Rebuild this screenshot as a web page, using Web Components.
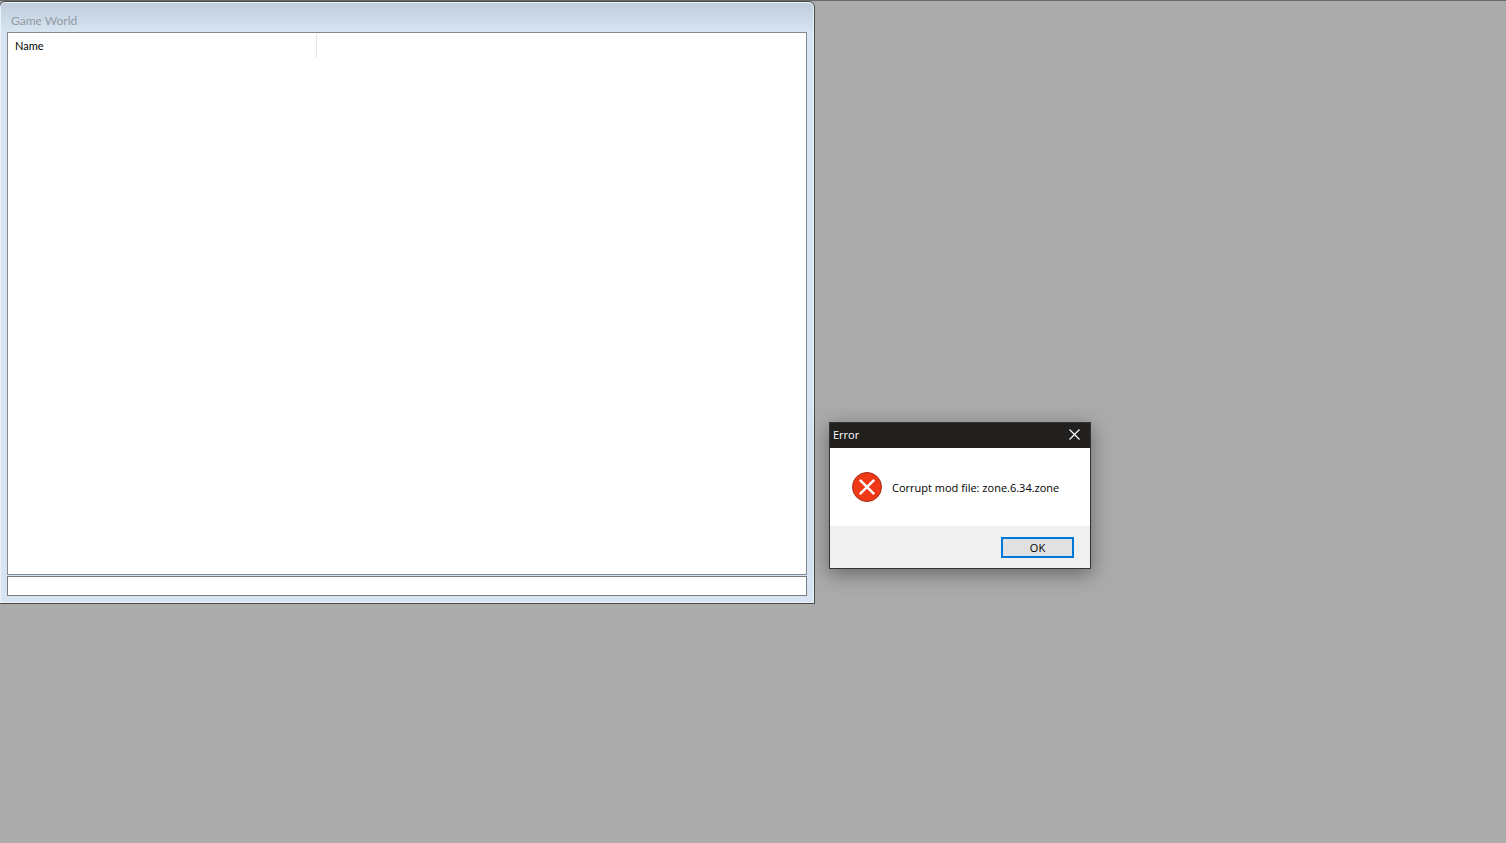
<!DOCTYPE html>
<html lang="en">
<head>
<meta charset="utf-8">
<title>Game World</title>
<style>
    html, body {
        height: 100%;
        margin: 0;
    }
    body {
        font: 11px/16px "Open Sans", "Noto Sans", sans-serif;
        color: #000;
        overflow: hidden;
    }
</style>
</head>
<body>

<mdi-desktop>
    <mdi-window caption="Game World" style="left: -1px; top: 1px; width: 816px; height: 603px">
        <column-list columns="Name"></column-list>
        <status-field label="Status"></status-field>
    </mdi-window>

    <message-box caption="Error" style="left: 829px; top: 422px; width: 262px">
        <error-icon slot="icon"></error-icon>
        Corrupt mod file: zone.6.34.zone
        <dialog-button slot="actions">OK</dialog-button>
    </message-box>
</mdi-desktop>

<script>
class MdiDesktop extends HTMLElement {
    constructor() {
        super();
        this.attachShadow({ mode: 'open' });
        this.shadowRoot.innerHTML = `
            <style>
                :host {
                    display: block;
                    position: relative;
                    box-sizing: border-box;
                    height: 100%;
                    overflow: hidden;
                    border-top: 1px solid #696969;
                    background: #ababab;
                }
                .surface {
                    position: absolute;
                    inset: -1px 0 0;
                }
            </style>
            <div class="surface"><slot></slot></div>
        `;
    }
}

class MdiWindow extends HTMLElement {
    constructor() {
        super();
        this.attachShadow({ mode: 'open' });
        this.shadowRoot.innerHTML = `
            <style>
                :host {
                    display: flex;
                    flex-direction: column;
                    position: absolute;
                    box-sizing: border-box;
                    padding: 0 6px 6px;
                    border: 1px solid #4b4b4b;
                    border-radius: 6px 6px 0 0;
                    background: linear-gradient(#bfcddb, #d7e4f2 30px);
                    box-shadow: inset 0 0 0 1px #edf2f9;
                }
                header {
                    display: flex;
                    align-items: center;
                    height: 30px;
                    padding: 8px 5px 0;
                    box-sizing: border-box;
                    color: #929aa3;
                    font-family: Lato, sans-serif;
                    font-size: 12px;
                }
                .client {
                    flex: 1;
                    display: flex;
                    flex-direction: column;
                    gap: 1px;
                    padding: 0 1px 1px;
                }
            </style>
            <header></header>
            <div class="client"><slot></slot></div>
        `;
    }

    connectedCallback() {
        this.shadowRoot.querySelector('header').textContent = this.getAttribute('caption') || '';
    }
}

class ColumnList extends HTMLElement {
    constructor() {
        super();
        this.attachShadow({ mode: 'open' });
        this.shadowRoot.innerHTML = `
            <style>
                :host {
                    display: block;
                    flex: 1;
                    border: 1px solid #828790;
                    background: #fff;
                }
                table {
                    border-spacing: 0;
                    padding-top: 1px;
                }
                th {
                    width: 301px;
                    height: 24px;
                    padding: 0 0 0 7px;
                    border-right: 1px solid #e5e5e5;
                    font-family: Lato, sans-serif;
                    font-weight: normal;
                    text-align: left;
                }
            </style>
            <table>
                <thead><tr></tr></thead>
                <tbody></tbody>
            </table>
        `;
    }

    connectedCallback() {
        const row = this.shadowRoot.querySelector('thead tr');
        const columns = (this.getAttribute('columns') || '').split(',');
        for (const name of columns) {
            const th = document.createElement('th');
            th.scope = 'col';
            th.textContent = name;
            row.appendChild(th);
        }
    }
}

class StatusField extends HTMLElement {
    constructor() {
        super();
        this.attachShadow({ mode: 'open' });
        this.shadowRoot.innerHTML = `
            <style>
                :host {
                    display: block;
                }
                input {
                    display: block;
                    box-sizing: border-box;
                    width: 100%;
                    height: 20px;
                    padding: 0 6px;
                    border: 1px solid #7a7a7a;
                    border-radius: 0;
                    background: #fff;
                    font: inherit;
                }
            </style>
            <input type="text" readonly>
        `;
    }

    connectedCallback() {
        this.shadowRoot.querySelector('input').setAttribute('aria-label', this.getAttribute('label') || '');
    }
}

class MessageBox extends HTMLElement {
    constructor() {
        super();
        this.attachShadow({ mode: 'open' });
        this.shadowRoot.innerHTML = `
            <style>
                :host {
                    display: block;
                    position: absolute;
                    box-sizing: border-box;
                    border: 1px solid #333;
                    background: #fff;
                    box-shadow: 0 5px 18px 1px rgba(0, 0, 0, .36);
                }
                header {
                    display: flex;
                    align-items: center;
                    justify-content: space-between;
                    box-sizing: border-box;
                    height: 25px;
                    padding: 0 10px 2px 3px;
                    background: #21201e;
                    color: #fff;
                }
                .close {
                    display: block;
                    padding: 0;
                    border: 0;
                    background: none;
                    color: inherit;
                }
                .close svg {
                    display: block;
                }
                .body {
                    display: flex;
                    align-items: center;
                    gap: 10px;
                    height: 78px;
                    padding: 0 22px;
                    white-space: nowrap;
                }
                .text {
                    padding-top: 2px;
                }
                footer {
                    display: flex;
                    justify-content: flex-end;
                    padding: 11px 16px 10px;
                    background: #f0f0f0;
                }
            </style>
            <header>
                <span class="caption"></span>
                <button class="close" type="button" aria-label="Close">
                    <svg width="11" height="11" viewBox="0 0 11 11">
                        <path d="M.5.5l10 10M10.5.5l-10 10" fill="none" stroke="currentColor" stroke-width="1.2"/>
                    </svg>
                </button>
            </header>
            <div class="body">
                <slot name="icon"></slot>
                <div class="text"><slot></slot></div>
            </div>
            <footer><slot name="actions"></slot></footer>
        `;
    }

    connectedCallback() {
        this.setAttribute('role', 'alertdialog');
        this.shadowRoot.querySelector('.caption').textContent = this.getAttribute('caption') || '';
        this.shadowRoot.querySelector('.close').addEventListener('click', () => this.remove());
    }
}

class ErrorIcon extends HTMLElement {
    constructor() {
        super();
        this.attachShadow({ mode: 'open' });
        this.shadowRoot.innerHTML = `
            <style>
                :host, svg {
                    display: block;
                }
            </style>
            <svg width="30" height="30" viewBox="0 0 30 30" aria-hidden="true">
                <circle cx="15" cy="15" r="14.5" fill="#f03a17" stroke="#a32c18"/>
                <path d="M7.8 7.8l14.4 14.4M22.2 7.8L7.8 22.2" fill="none" stroke="#fff" stroke-width="2.5"/>
            </svg>
        `;
    }
}

class DialogButton extends HTMLElement {
    constructor() {
        super();
        this.attachShadow({ mode: 'open' });
        this.shadowRoot.innerHTML = `
            <style>
                :host {
                    display: block;
                }
                button {
                    display: block;
                    min-width: 73px;
                    height: 21px;
                    padding: 0 8px;
                    border: 2px solid #0078d7;
                    border-radius: 0;
                    background: #e1e1e1;
                    color: inherit;
                    font: inherit;
                }
            </style>
            <button type="button"><slot></slot></button>
        `;
    }
}

customElements.define('mdi-desktop', MdiDesktop);
customElements.define('mdi-window', MdiWindow);
customElements.define('column-list', ColumnList);
customElements.define('status-field', StatusField);
customElements.define('message-box', MessageBox);
customElements.define('error-icon', ErrorIcon);
customElements.define('dialog-button', DialogButton);
</script>
</body>
</html>
